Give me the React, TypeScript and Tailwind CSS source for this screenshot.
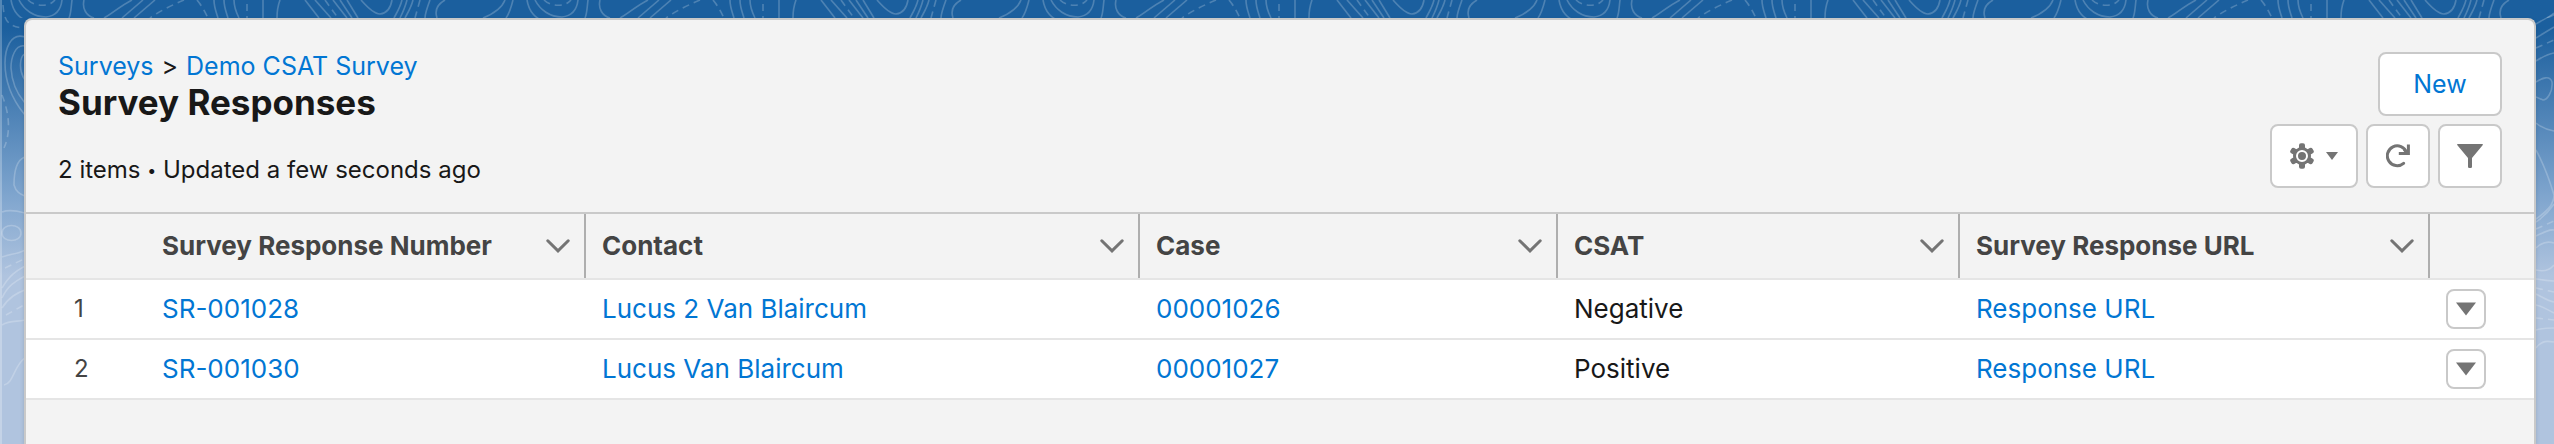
import React from "react";

const TOPO_TILE = [
  "M11 0C13 12 20 19 28 21",
  "M19 0C24 10 34 17 46 17C56 16 61 9 62 0",
  "M72 0C71 8 71 14 69 18",
  "M84 0C82 8 86 16 94 18",
  "M132 0C120 6 112 14 104 18",
  "M143 0L122 18",
  "M155 0L134 18",
  "M214 0C214 8 217 14 218 18",
  "M224 0C224 8 227 14 228 18",
  "M234 0C234 8 237 14 239 18",
  "M263 0V18",
  "M280 0C277 8 277 12 277 18",
  "M305 0L319 18",
  "M315 0L331 18",
  "M333 0L347 18",
  "M340 0L352 18",
  "M347 0L358 18",
  "M361 0C368 8 374 14 380 14C388 13 391 6 392 0",
  "M402 0C400 8 396 14 394 18",
  "M407 0C405 8 402 14 400 18",
  "M413 0C411 8 407 14 405 18",
  "M430 0C427 8 425 14 425 18",
  "M445 0C436 5 435 12 437 18",
  "M505 0C502 8 493 14 483 18",
  "M513 0C511 8 509 14 506 18",
];

const TOPO_TILE_DASHED = [
  "M28 0C34 6 48 8 55 0",
  "M184 0C172 5 158 12 150 18",
  "M197 0C202 6 205 12 208 18",
  "M247 4V18",
  "M325 0L338 18",
  "M420 0L415 18",
];

const LEFT_LINES = [
  "M25 37C10 32 5 50 5 63C5 85 15 103 25 115",
  "M25 46C15 44 11 58 11 68C12 85 18 95 25 103",
  "M25 54C20 56 18 70 25 80",
  "M25 157C16 160 14 172 14 185C16 192 20 194 25 196",
  "M2 212C10 209 18 211 25 213",
  "M2 233C2 223 21 223 21 233C21 243 2 243 2 233",
  "M2 257C10 254 18 254 25 250",
  "M2 288C10 274 18 270 25 266",
  "M2 298C8 285 16 281 25 276",
  "M2 308C8 298 18 292 25 290",
  "M2 325C10 320 18 322 25 320",
  "M4 385C14 383 14 365 25 358",
];
const LEFT_DASHED = [
  "M3 5C4 18 6 26 22 28",
  "M2 95C8 110 12 130 4 148",
  "M5 268L24 259",
  "M6 315L24 305",
];

const RIGHT_LINES = [
  "M0 24C6 20 12 18 18 13",
  "M0 38L18 27",
  "M0 61C8 56 12 54 18 53",
  "M0 82C6 78 14 75 16 82C17 92 11 100 7 100L0 97",
  "M0 123C6 128 12 130 18 131",
  "M0 150C8 165 15 185 18 195C18 205 10 212 0 219",
  "M0 222C6 218 14 210 18 204",
  "M0 236C8 232 14 229 18 230",
  "M0 248C6 242 12 241 18 243",
  "M0 270C8 272 14 270 18 265",
  "M0 279C8 280 12 281 18 281",
  "M0 294C8 298 12 301 18 302",
  "M0 305C6 306 12 310 18 313",
  "M0 330C6 328 12 328 18 328",
  "M0 348C6 340 12 341 18 342",
];
const RIGHT_DASHED = ["M0 48L18 40", "M0 229L18 221", "M0 288L18 292", "M0 318L18 320"];

function Lines({ solid, dashed }: { solid: string[]; dashed: string[] }) {
  return (
    <g fill="none" stroke="#ffffff" strokeOpacity="0.22" strokeWidth="1.6">
      {solid.map((d) => (
        <path key={d} d={d} />
      ))}
      {dashed.map((d) => (
        <path key={d} d={d} strokeDasharray="7 5" />
      ))}
    </g>
  );
}

function Backdrop() {
  return (
    <div
      aria-hidden="true"
      className="absolute inset-0 bg-[linear-gradient(to_bottom,#1b5f9e_0px,#1b5f9e_28px,#7fa5ce_196px,#b0c4df_276px)]"
    >
      <svg className="absolute inset-x-0 top-0 h-6 w-full">
        <defs>
          <pattern id="topo" width="516" height="24" patternUnits="userSpaceOnUse">
            <Lines solid={TOPO_TILE} dashed={TOPO_TILE_DASHED} />
          </pattern>
        </defs>
        <rect width="100%" height="18" fill="url(#topo)" />
      </svg>
      <svg className="absolute top-0 left-0 h-[444px] w-6" viewBox="0 0 24 444">
        <Lines solid={LEFT_LINES} dashed={LEFT_DASHED} />
      </svg>
      <svg className="absolute top-0 right-0 h-[444px] w-[18px]" viewBox="0 0 18 444">
        <Lines solid={RIGHT_LINES} dashed={RIGHT_DASHED} />
      </svg>
      <div className="absolute inset-y-0 left-0 w-0.5 bg-white/25" />
    </div>
  );
}

function GearIcon() {
  return (
    <svg className="h-[26px] w-6" viewBox="0 0 24 26" fill="#747474" aria-hidden="true">
      <circle cx="12" cy="13" r="9" />
      <rect x="9" y="0.3" width="6" height="25.4" rx="2" />
      <rect x="9" y="0.3" width="6" height="25.4" rx="2" transform="rotate(60 12 13)" />
      <rect x="9" y="0.3" width="6" height="25.4" rx="2" transform="rotate(120 12 13)" />
      <circle cx="12" cy="13" r="5" fill="none" stroke="#ffffff" strokeWidth="2" />
    </svg>
  );
}

function RefreshIcon() {
  return (
    <svg className="size-6" viewBox="0 0 24 24" fill="none" stroke="#747474" strokeWidth="3" aria-hidden="true">
      <path d="M20.6 8.6A9.9 9.9 0 1 0 17.6 19.3" strokeLinecap="round" />
      <path d="M22.4 0.6V9.4H12.8" strokeWidth="3" />
      <path d="M18 5.5L21.5 9" />
    </svg>
  );
}

function FilterIcon() {
  return (
    <svg className="h-6 w-[26px]" viewBox="0 0 26 24" fill="#747474" aria-hidden="true">
      <path d="M0.6 0H25.4Q26.3 0.3 25.6 1.2L15 14V22.8Q15 24 13.8 24H12.2Q11 24 11 22.8V14L0.4 1.2Q-0.3 0.3 0.6 0Z" />
    </svg>
  );
}

function ChevronIcon() {
  return (
    <svg className="h-3.5 w-6" viewBox="0 0 24 14" fill="none" stroke="#747474" strokeWidth="3" strokeLinecap="round" aria-hidden="true">
      <path d="M1.8 1.8L12 11.8L22.2 1.8" />
    </svg>
  );
}

const toolButton =
  "flex h-16 items-center justify-center rounded-lg border-2 border-[#c9c9c9] bg-white";

const COLUMNS = ["Survey Response Number", "Contact", "Case", "CSAT", "Survey Response URL"];

const ROWS = [
  { number: "SR-001028", contact: "Lucus 2 Van Blaircum", caseNo: "00001026", csat: "Negative" },
  { number: "SR-001030", contact: "Lucus Van Blaircum", caseNo: "00001027", csat: "Positive" },
];

function CellLink({ children }: { children: React.ReactNode }) {
  return (
    <a href="#" className="text-[#0176d3]">
      {children}
    </a>
  );
}

export default function App() {
  return (
    <div className="relative flex min-h-screen pt-[18px] pr-[18px] pl-6 font-[Inter,'Liberation_Sans',sans-serif] text-[25px] leading-9 text-[#181818]">
      <Backdrop />
      <main className="relative min-w-0 flex-1 rounded-t-lg border-2 border-b-0 border-[#c9c9c9] bg-[#f3f3f3] shadow-[0_2px_4px_rgba(0,0,0,0.15)]">
        <header className="flex items-start justify-between border-b-2 border-[#c9c9c9] px-8 pt-7">
          <div className="pb-6">
            <nav aria-label="Breadcrumb" className="flex gap-2">
              <CellLink>Surveys</CellLink>
              <span>&gt;</span>
              <CellLink>Demo CSAT Survey</CellLink>
            </nav>
            <h1 className="text-[35px] leading-9 font-bold">Survey Responses</h1>
            <p className="mt-8 text-2xl leading-9">
              2 items <span className="align-[2px] text-base leading-none">•</span> Updated a few seconds ago
            </p>
          </div>
          <div className="flex flex-col items-end gap-2 pt-1">
            <button type="button" className={toolButton + " w-[124px] text-[#0176d3]"}>
              New
            </button>
            <div className="flex gap-2">
              <button type="button" aria-label="List settings" className={toolButton + " w-[88px] gap-3"}>
                <GearIcon />
                <svg className="h-2 w-3" viewBox="0 0 12 8" fill="#747474" aria-hidden="true">
                  <path d="M0 0H12L6 8Z" />
                </svg>
              </button>
              <button type="button" aria-label="Refresh" className={toolButton + " w-16"}>
                <RefreshIcon />
              </button>
              <button type="button" aria-label="Filters" className={toolButton + " w-16"}>
                <FilterIcon />
              </button>
            </div>
          </div>
        </header>

        <table className="w-full table-fixed border-separate border-spacing-0 text-left text-[26px] leading-9">
          <colgroup>
            <col className="w-[120px]" />
            <col className="w-[440px]" />
            <col className="w-[554px]" />
            <col className="w-[418px]" />
            <col className="w-[402px]" />
            <col className="w-[470px]" />
            <col className="w-[104px]" />
          </colgroup>
          <thead>
            <tr>
              <td className="border-b-2 border-[#e5e5e5]" />
              {COLUMNS.map((name) => (
                <th key={name} scope="col" className="border-b-2 border-[#e5e5e5] p-0 font-bold text-[#444444]">
                  <div className="flex h-16 items-center justify-between border-r-2 border-[#aeaeae] pr-3.5 pl-4">
                    {name}
                    <button type="button" aria-label={name + " column actions"}>
                      <ChevronIcon />
                    </button>
                  </div>
                </th>
              ))}
              <td className="border-b-2 border-[#e5e5e5]" />
            </tr>
          </thead>
          <tbody className="bg-white">
            {ROWS.map((row, i) => (
              <tr key={row.number} className="h-[60px] *:border-b-2 *:border-[#e5e5e5] *:py-0 *:pr-4 *:pl-4">
                <td className="text-2xl text-[#444444]">
                  <span className="block pl-8">{i + 1}</span>
                </td>
                <td>
                  <CellLink>{row.number}</CellLink>
                </td>
                <td>
                  <CellLink>{row.contact}</CellLink>
                </td>
                <td>
                  <CellLink>{row.caseNo}</CellLink>
                </td>
                <td>{row.csat}</td>
                <td>
                  <CellLink>Response URL</CellLink>
                </td>
                <td>
                  <button
                    type="button"
                    aria-label="Row actions"
                    className="flex size-10 items-center justify-center rounded-lg border-2 border-[#c9c9c9] bg-white"
                  >
                    <svg className="h-3.5 w-5" viewBox="0 0 20 14" fill="#747474" aria-hidden="true">
                      <path d="M0 0.5H20L10 13.5Z" />
                    </svg>
                  </button>
                </td>
              </tr>
            ))}
          </tbody>
        </table>
      </main>
    </div>
  );
}
